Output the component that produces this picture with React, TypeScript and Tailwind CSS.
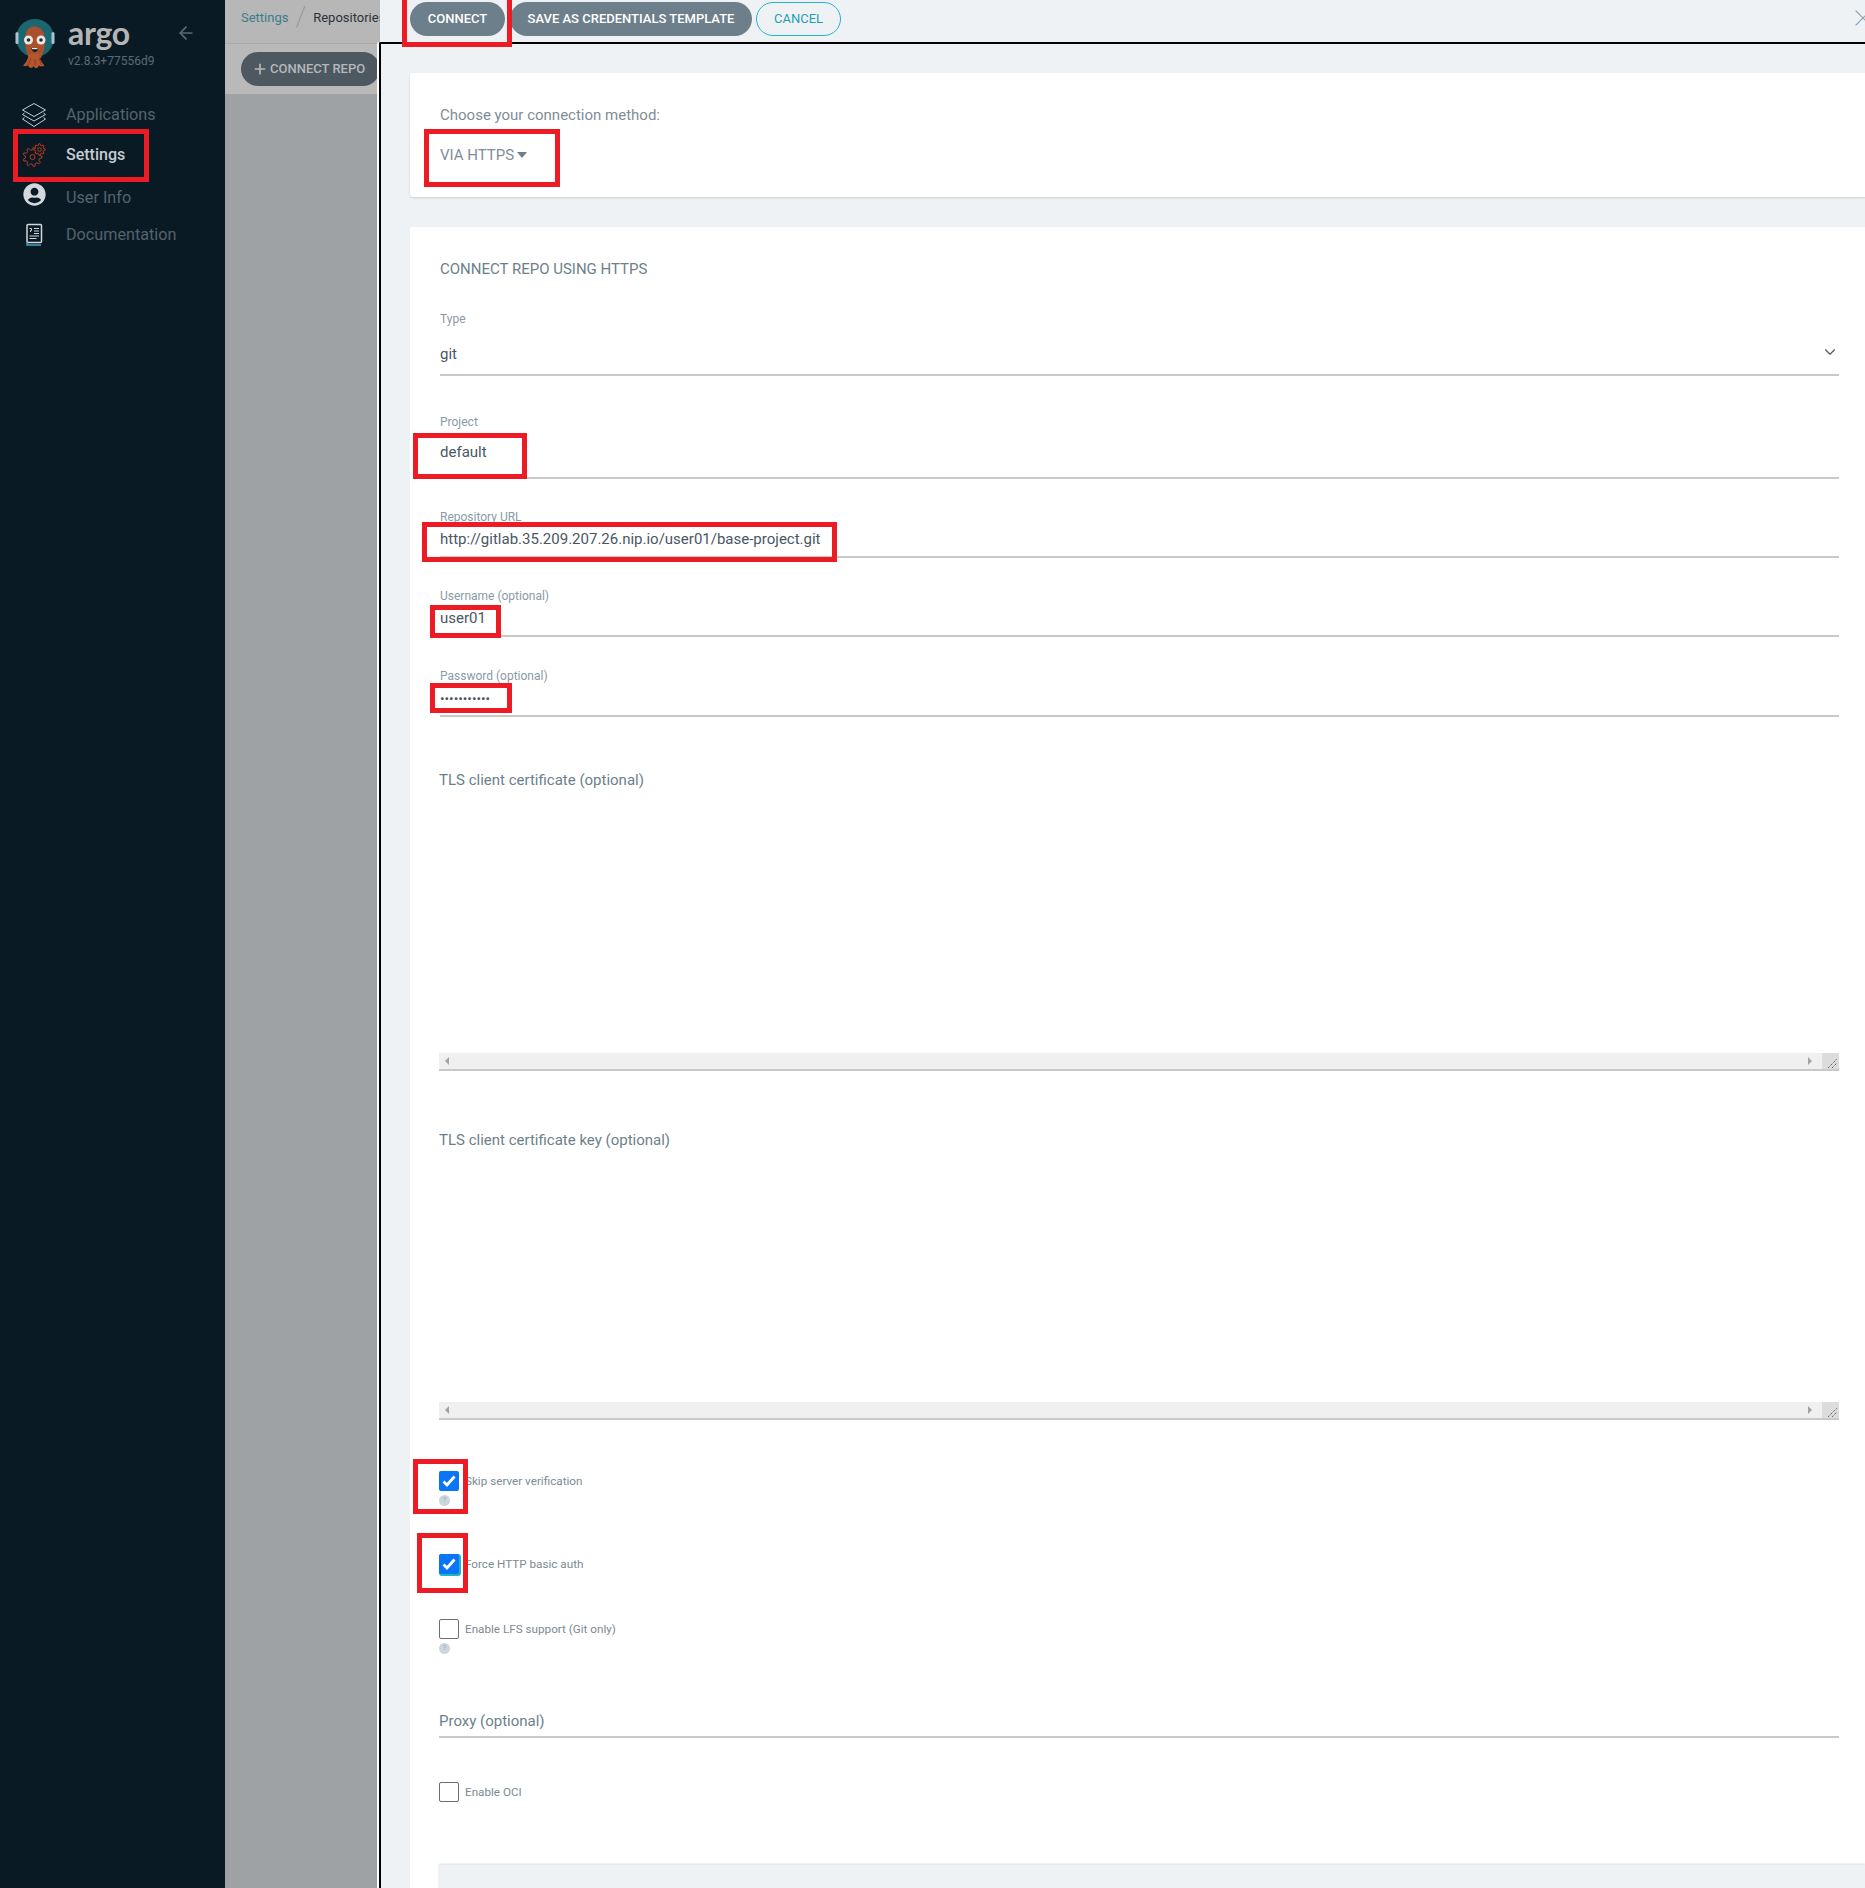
import { ChevronDown, Plus, X, ArrowLeft } from "lucide-react"
import { FaUserCircle } from "react-icons/fa"
import type { ReactNode } from "react"

function gearPath(cx: number, cy: number, outer: number, inner: number, teeth: number) {
  const step = (Math.PI * 2) / teeth
  const pts: string[] = []
  for (let i = 0; i < teeth; i++) {
    const a = i * step
    const at = (r: number, t: number) => `${(cx + r * Math.cos(t)).toFixed(2)} ${(cy + r * Math.sin(t)).toFixed(2)}`
    pts.push(at(inner, a - step * 0.3), at(outer, a - step * 0.14), at(outer, a + step * 0.14), at(inner, a + step * 0.3))
  }
  return `M${pts.join("L")}Z`
}

function ArgoLogo() {
  return (
    <svg width="40" height="52" viewBox="0 0 40 52" className="shrink-0">
      <circle cx="20" cy="20" r="19" fill="#1c6670" />
      <rect x="0.500" y="14" width="3" height="12" rx="1.500" fill="#a9c4cd" />
      <rect x="36.500" y="14" width="3" height="12" rx="1.500" fill="#a9c4cd" />
      <path d="M10 24C10 13 13 8.500 19.500 8.500S30 13 30 24c0 6-2 12-4 16H14c-2-4-4-10-4-16Z" fill="#a9502f" />
      <path
        d="M14 36c-1 5-3 9-6 11.500 2 1.500 4 .5 5-.5 0 2 2 3 3.500 3 .5 0 1.500-1 2-2 .5 1.500 2 2.500 3.500 2 1-.5 1.500-1.500 2-2.500 1 1 3 1.500 5.500 0-3-3-5-7-6-11.500Z"
        fill="#b5562f"
      />
      <path d="M16 40l-2.500 7M20 41v7M24 40l2.500 7" stroke="#7d3a20" strokeWidth="0.800" />
      <circle cx="13.500" cy="22" r="4.500" fill="#e8e8e6" />
      <circle cx="26" cy="22" r="4.500" fill="#e8e8e6" />
      <circle cx="13.500" cy="22" r="1.800" fill="#2a2a2a" />
      <circle cx="26" cy="22" r="1.800" fill="#2a2a2a" />
      <path d="M16.500 30h6.500c0 2.800-1.300 4-3.200 4s-3.300-1.200-3.300-4Z" fill="#1c1c1c" />
      <path d="M17 30h5.500v1.200H17Z" fill="#e8e8e6" />
    </svg>
  )
}

function LayersIcon() {
  return (
    <svg width="26" height="26" viewBox="0 0 26 26" fill="none" stroke="#c5d0d6" strokeWidth="1" strokeLinejoin="round">
      <path d="M13 1.500L24.500 8L13 14.500L1.500 8Z" />
      <path d="M3.500 11L1.500 12.500L13 19L24.500 12.500L22.500 11" />
      <path d="M3.500 15.500L1.500 17L13 24.500L24.500 17L22.500 15.500" />
    </svg>
  )
}

function GearsIcon() {
  return (
    <svg width="24" height="24" viewBox="0 0 24 24" fill="none" stroke="#b53a22" strokeWidth="1">
      <path d={gearPath(10.500, 14, 9.500, 7.200, 9)} />
      <circle cx="10.500" cy="14" r="2.500" />
      <path d={gearPath(17.500, 6.500, 5.800, 4.300, 8)} fill="#0a1a24" />
      <circle cx="17.500" cy="6.500" r="1.800" />
    </svg>
  )
}

function DocsIcon() {
  return (
    <svg width="20" height="24" viewBox="0 0 20 24" fill="none">
      <rect x="3" y="1.500" width="14.500" height="18" rx="1" stroke="#cfd8dc" strokeWidth="1.500" />
      <path d="M3 19.500v2.500h14" stroke="#4aa3c0" strokeWidth="1.500" />
      <path d="M5.500 5.500h2v2h-1v1.500M10 5.500h5M10 8h5M10 10.500h5M5.500 13h9.500M5.500 15.500h7" stroke="#cfd8dc" strokeWidth="1" />
    </svg>
  )
}

function NavItem({ icon, label, active, className }: { icon: ReactNode; label: string; active?: boolean; className: string }) {
  return (
    <div className={`flex items-center ${className}`}>
      <div className="flex w-[66px] justify-center pl-[2px]">{icon}</div>
      <span className={active ? "text-[16px] font-medium text-[#c5ccd2]" : "text-[16.200px] text-[#56626c]"}>{label}</span>
    </div>
  )
}

function Field({ label, value, valueClass, className }: { label: string; value: string; valueClass: string; className: string }) {
  return (
    <div className={`border-b-2 border-[#c9c9c9] ${className}`}>
      <div className="text-[12px] leading-[14px] text-[#8a9aa6]">{label}</div>
      <div className={`leading-[20px] text-[#495763] ${valueClass}`}>{value}</div>
    </div>
  )
}

function CertArea({ label, className, bodyClass }: { label: string; className: string; bodyClass: string }) {
  return (
    <div className={`-ml-px ${className}`}>
      <div className="text-[15px] leading-[20px] text-[#6d7f8b]">{label}</div>
      <div className={bodyClass} />
      <div className="flex h-[18px] items-center border-b-2 border-[#c9c9c9] bg-[#f0f0f0]">
        <span className="ml-[6px] h-0 w-0 border-y-[4px] border-r-[4px] border-y-transparent border-r-[#a3a3a3]" />
        <span className="ml-auto h-0 w-0 border-y-[4px] border-l-[4px] border-y-transparent border-l-[#a3a3a3]" />
        <div className="relative ml-[10px] h-full w-[17px] overflow-hidden bg-[#dcdcdc]">
          <svg width="17" height="16" viewBox="0 0 17 16" className="absolute inset-0">
            <path d="M6 15L15 6M10 15L15 10" stroke="#555" strokeWidth="1" strokeDasharray="1.200 1" />
          </svg>
        </div>
      </div>
    </div>
  )
}

function CheckRow({ label, checked, focused, help, className }: { label: string; checked?: boolean; focused?: boolean; help?: boolean; className: string }) {
  return (
    <div className={`-ml-px ${className}`}>
      <div className="flex items-center">
        {checked ? (
          <div className={`flex h-[20px] w-[20px] items-center justify-center rounded-[2px] bg-[#0a75f5] ${focused ? "shadow-[1px_1px_0_1px_#1fb5c5]" : ""}`}>
            <svg width="14" height="12" viewBox="0 0 14 12" fill="none">
              <path d="M1.500 6.500L5 10L12.500 1.500" stroke="white" strokeWidth="2.800" />
            </svg>
          </div>
        ) : (
          <div className="h-[20px] w-[20px] rounded-[2px] border border-[#6e6e6e] bg-white" />
        )}
        <span className="ml-[6px] text-[11.700px] leading-[20px] text-[#7b8a95]">{label}</span>
      </div>
      {help && (
        <div className="mt-[4px] flex h-[11px] w-[11px] items-center justify-center rounded-full bg-[#ccd6dd] text-[7px] leading-none font-bold text-[#aab8c2]">
          ?
        </div>
      )}
    </div>
  )
}

function Mark({ className }: { className: string }) {
  return <div className={`pointer-events-none absolute border-[5px] border-[#ed1c24] ${className}`} />
}

export default function App() {
  return (
    <div className="relative flex h-[1888px] min-h-screen w-full overflow-hidden bg-white font-['Roboto',sans-serif]">
      {/* sidebar */}
      <aside className="flex w-[225px] shrink-0 flex-col bg-[#0a1a24]">
        <div className="flex items-start pt-[18px] pl-[15px]">
          <ArgoLogo />
          <div className="ml-[13px] w-[90px]">
            <div className="font-['Lato',sans-serif] text-[32px] leading-[30px] font-bold tracking-[-0.3px] text-[#b5b5b5]">argo</div>
            <div className="mt-[6px] text-[12px] leading-[14px] text-[#5b6a76]">v2.8.3+77556d9</div>
          </div>
          <ArrowLeft size={20} strokeWidth={2} className="mt-[5px] ml-[18px] text-[#5d6870]" />
        </div>
        <NavItem className="mt-[33px] h-[24px]" label="Applications" icon={<LayersIcon />} />
        <NavItem className="mt-[16px] h-[24px]" active label="Settings" icon={<GearsIcon />} />
        <NavItem className="mt-[19px] h-[24px]" label="User Info" icon={<FaUserCircle size={23} className="-mt-[8px] text-[#d3d8dc]" />} />
        <NavItem className="mt-[13px] h-[24px]" label="Documentation" icon={<DocsIcon />} />
      </aside>

      {/* page behind the panel */}
      <div className="flex w-[155px] shrink-0 flex-col overflow-hidden bg-[#9ea2a5]">
        <div className="flex h-[43px] items-center whitespace-nowrap bg-[#b7b7b7] pl-[16px] text-[13px]">
          <span className="mb-[7px] text-[#3d7d89]">Settings</span>
          <span className="mb-[9px] ml-[7px] text-[28px] leading-[30px] font-thin text-[#8a8a8a]">/</span>
          <span className="mb-[7px] ml-[7px] text-[#2c3339]">Repositories</span>
        </div>
        <div className="flex h-[51px] items-center border-t border-[#aaaaaa] bg-[#b9b9b9] pl-[16px]">
          <div className="flex h-[34px] w-[139px] shrink-0 items-center rounded-[17px] bg-[#4d5861] pl-[12px] text-[13px] font-medium whitespace-nowrap text-[#b4b8bb]">
            <Plus size={16} strokeWidth={2.500} className="mr-[2px] -ml-[1px]" />
            CONNECT REPO
          </div>
        </div>
      </div>

      {/* sliding panel */}
      <div className="relative min-w-0 flex-1 bg-[#eff2f5]">
        <div className="flex h-[42px] items-start pt-[2px] pl-[30px] text-[13px] font-medium">
          <div className="flex h-[34px] w-[95px] items-center justify-center rounded-[17px] bg-[#6d7f8b] text-white">CONNECT</div>
          <div className="ml-[5px] flex h-[34px] w-[242px] items-center justify-center rounded-[17px] bg-[#6d7f8b] text-white">SAVE AS CREDENTIALS TEMPLATE</div>
          <div className="ml-[4px] flex h-[34px] w-[85px] items-center justify-center rounded-[17px] border border-[#21b6c8] font-normal text-[#1f9fb3]">CANCEL</div>
          <X size={28} strokeWidth={1} className="mt-[2px] ml-auto -mr-[12px] text-[#8fa4b1]" />
        </div>
        <div className="-ml-px h-full rounded-tl-[2px] border-t-2 border-l-2 border-black pt-[29px] pl-[29px] shadow-[-2px_0_0_#fff]">
          <div className="h-[124px] rounded-l-[3px] bg-white pt-[32px] pl-[30px] shadow-[0_1px_2px_rgba(0,0,0,0.15)]">
            <div className="text-[15px] leading-[20px] text-[#7f8d98]">Choose your connection method:</div>
            <div className="mt-[20px] flex items-center text-[15px] leading-[20px] text-[#7f8d98]">
              VIA HTTPS
              <span className="ml-[3px] h-0 w-0 border-x-[5.500px] border-t-[6px] border-x-transparent border-t-[#6d7f8b]" />
            </div>
          </div>
          <div className="mt-[30px] h-full bg-white pt-[32px] pr-[26px] pl-[30px]">
            <div className="text-[15px] leading-[20px] text-[#6d7f8b]">CONNECT REPO USING HTTPS</div>

            <div className="mt-[33px] border-b-2 border-[#c9c9c9] pb-[10px]">
              <div className="text-[12px] leading-[14px] text-[#8a9aa6]">Type</div>
              <div className="mt-[18px] flex items-center justify-between text-[15px] leading-[20px] text-[#495763]">
                git
                <ChevronDown size={18} strokeWidth={1.500} className="-mt-[4px] text-[#495763]" />
              </div>
            </div>
            <Field className="mt-[39px] pb-[15px]" valueClass="mt-[13px] text-[15px]" label="Project" value="default" />
            <Field className="mt-[31px] pb-[7px]" valueClass="mt-[5px] text-[15px]" label="Repository URL" value="http://gitlab.35.209.207.26.nip.io/user01/base-project.git" />
            <Field className="mt-[31px] pb-[7px]" valueClass="mt-[5px] text-[15px]" label="Username (optional)" value="user01" />
            <Field className="mt-[32px] pb-[7px]" valueClass="mt-[5px] text-[13.500px]" label="Password (optional)" value="•••••••••••" />

            <CertArea className="mt-[53px]" bodyClass="h-[263px]" label="TLS client certificate (optional)" />
            <CertArea className="mt-[59px]" bodyClass="h-[252px]" label="TLS client certificate key (optional)" />

            <CheckRow className="mt-[51px]" checked help label="Skip server verification" />
            <CheckRow className="mt-[48px]" checked focused label="Force HTTP basic auth" />
            <CheckRow className="mt-[45px]" help label="Enable LFS support (Git only)" />

            <div className="-ml-px mt-[57px] border-b-2 border-[#c9c9c9] pb-[5px] text-[15px] leading-[20px] text-[#6d7f8b]">Proxy (optional)</div>
            <CheckRow className="mt-[44px]" label="Enable OCI" />
            <div className="-ml-px -mr-[26px] mt-[63px] h-[24px] bg-[#eff2f5] shadow-[0_-1px_2px_rgba(0,0,0,0.15)]" />
          </div>
        </div>
      </div>

      {/* red annotation boxes drawn on top of the screenshot */}
      <Mark className="top-[129px] left-[13px] h-[53px] w-[136px]" />
      <Mark className="-top-[5px] left-[402px] h-[52px] w-[110px]" />
      <Mark className="top-[129px] left-[424px] h-[58px] w-[136px]" />
      <Mark className="top-[433px] left-[413px] h-[46px] w-[114px]" />
      <Mark className="top-[522px] left-[422px] h-[40px] w-[415px]" />
      <Mark className="top-[605px] left-[430px] h-[33px] w-[71px]" />
      <Mark className="top-[683px] left-[430px] h-[30px] w-[82px]" />
      <Mark className="top-[1459px] left-[413px] h-[55px] w-[55px]" />
      <Mark className="top-[1533px] left-[417px] h-[60px] w-[51px]" />
    </div>
  )
}
